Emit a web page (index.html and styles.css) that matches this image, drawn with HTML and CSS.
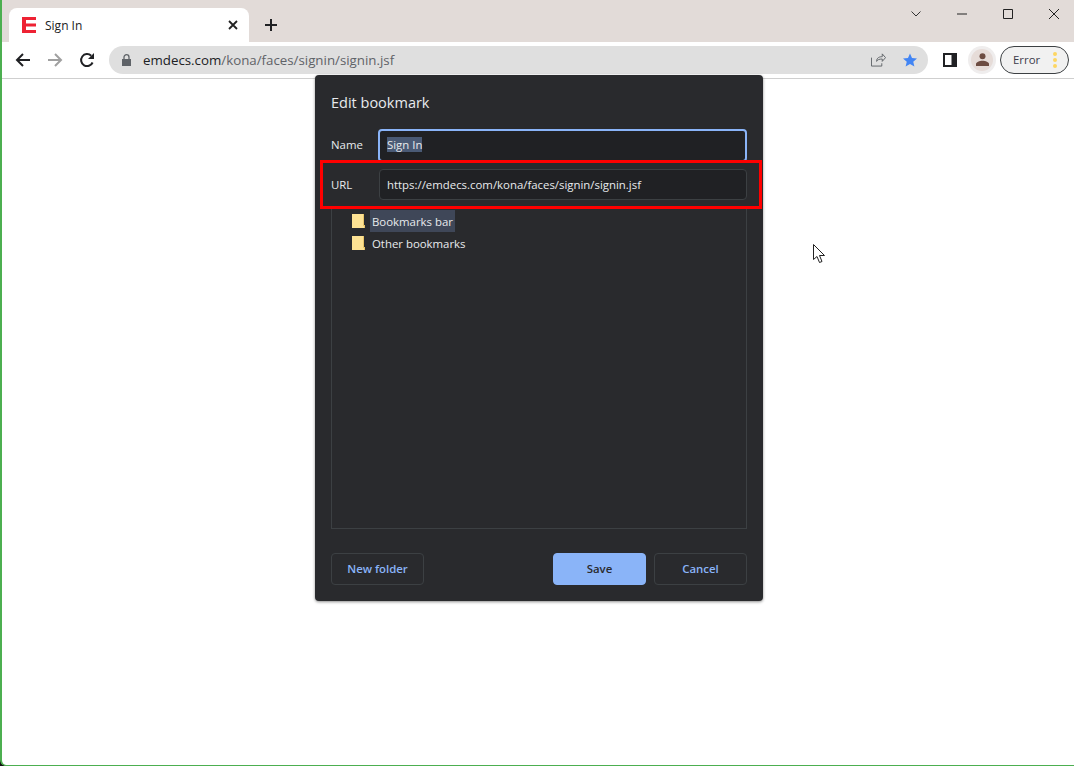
FILE: index.html
```html
<!DOCTYPE html>
<html lang="en">
<head>
    <meta charset="UTF-8">
    <title>Sign In</title>
    <link rel="stylesheet" href="styles.css">
</head>
<body>

<div class="janela">
    <div class="abas">
        <div class="aba">
            <svg class="favicon" width="14" height="16" viewBox="0 0 14 16"><path fill="#ee2233" d="M0 0h14v3H4v3.500h10v3H4V13h10v3H0z"/></svg>
            <span class="aba-titulo">Sign In</span>
            <svg class="aba-fechar" width="10" height="10" viewBox="0 0 10 10"><path stroke="#222" stroke-width="1.8" d="M1 1l8 8M9 1l-8 8"/></svg>
        </div>
        <svg class="nova-aba" width="12" height="12" viewBox="0 0 12 12"><path stroke="#202124" stroke-width="2" d="M6 0v12M0 6h12"/></svg>
        <div class="controles">
            <svg width="10" height="6" viewBox="0 0 10 6"><path fill="none" stroke="#333" d="M.5.500L5 5 9.500.500"/></svg>
            <svg width="10" height="10" viewBox="0 0 10 10"><path stroke="#222" d="M0 5h10"/></svg>
            <svg width="10" height="10" viewBox="0 0 10 10"><path fill="none" stroke="#222" d="M.5.5h9v9h-9z"/></svg>
            <svg width="10" height="10" viewBox="0 0 10 10"><path stroke="#222" d="M0 0l10 10M10 0L0 10"/></svg>
        </div>
    </div>

    <div class="barra">
        <svg class="nav" width="16" height="14" viewBox="0 0 16 14"><path fill="none" stroke="#202124" stroke-width="2" d="M15 7H2M8 1L2 7l6 6"/></svg>
        <svg class="nav" width="16" height="14" viewBox="0 0 16 14"><path fill="none" stroke="#a0a0a0" stroke-width="2" d="M1 7h13M8 1l6 6-6 6"/></svg>
        <svg class="nav nav-ultimo" width="16" height="16" viewBox="0 0 16 16"><path fill="none" stroke="#202124" stroke-width="2" d="M13.6 10.5A6 6 0 1 1 12.2 3.700"/><path fill="#202124" d="M15 1v6H9z"/></svg>
        <div class="url">
            <svg class="cadeado" width="9" height="12" viewBox="0 0 9 12"><path fill="#5f6368" d="M0 5h9v7H0z"/><path fill="none" stroke="#5f6368" stroke-width="1.300" d="M2 5V3.200a2.500 2.500 0 0 1 5 0V5"/></svg>
            <span class="url-texto"><b>emdecs.com</b>/kona/faces/signin/signin.jsf</span>
            <svg class="compartilhar" width="15" height="15" viewBox="0 0 16 15"><path fill="none" stroke="#5f6368" d="M.5 5.500v9h11v-3M6 9.500c0-4 3-5 6-5V1.500l3.500 4-3.500 4V7c-3 0-5 .5-6 2.500z"/></svg>
            <svg class="estrela" width="14" height="14" viewBox="0 0 16 15"><path fill="#4285f4" d="M8 0l2.300 5.200 5.700.5-4.300 3.800 1.300 5.500L8 12.100 3 15l1.300-5.500L0 5.700l5.700-.5z"/></svg>
        </div>
        <svg class="painel" width="14" height="14" viewBox="0 0 14 14"><path fill="#202124" d="M0 0h14v14H0z"/><path fill="#fff" d="M2 2h6.500v10H2z"/></svg>
        <div class="perfil">
            <div class="perfil-foto">
                <svg width="13" height="13" viewBox="0 0 13 13"><circle cx="6.500" cy="3.200" r="3" fill="#6d4c41"/><path fill="#6d4c41" d="M0 13v-2c0-2 3.500-3.300 6.500-3.300S13 9 13 11v2z"/></svg>
            </div>
        </div>
        <div class="erro">
            <span>Error</span>
            <div class="pontos"><i></i><i></i><i></i></div>
        </div>
    </div>

    <div class="pagina"></div>
</div>

<div class="dialogo">
    <div class="dialogo-titulo">Edit bookmark</div>
    <div class="linha linha-nome">
        <label>Name</label>
        <div class="campo campo-foco"><span class="selecao">Sign In</span></div>
    </div>
    <div class="linha linha-url">
        <label>URL</label>
        <div class="campo">https://emdecs.com/kona/faces/signin/signin.jsf</div>
    </div>
    <div class="arvore">
        <div class="item">
            <svg width="13" height="14" viewBox="0 0 13 14"><path fill="#fde293" d="M0 0h11v11h2v3H0z"/><path fill="#e8c468" d="M11 0h1v11h1v3h-1v-2h-1z"/></svg>
            <span class="item-nome ativo">Bookmarks bar</span>
        </div>
        <div class="item">
            <svg width="13" height="14" viewBox="0 0 13 14"><path fill="#fde293" d="M0 0h11v11h2v3H0z"/><path fill="#e8c468" d="M11 0h1v11h1v3h-1v-2h-1z"/></svg>
            <span class="item-nome">Other bookmarks</span>
        </div>
    </div>
    <div class="botoes">
        <button class="botao">New folder</button>
        <div class="botoes-direita">
            <button class="botao botao-salvar">Save</button>
            <button class="botao">Cancel</button>
        </div>
    </div>
</div>

<div class="destaque"></div>

<svg class="cursor" width="13" height="20" viewBox="0 0 13 20"><path fill="#fff" stroke="#222" d="M.5.5v15l3.500-3 2.500 6 2.500-1-2.500-6h5z"/></svg>

</body>
</html>
```

FILE: styles.css
```css
* {
    box-sizing: border-box;
}

body {
    margin: 0;
    height: 766px;
    overflow: hidden;
    background-color: #111;
    font-family: "Open Sans", "Noto Sans", sans-serif;
    color: #202124;
}

.janela {
    height: 766px;
    display: flex;
    flex-direction: column;
    background-color: #fff;
    border-left: 2px solid #4caf50;
    border-bottom: 1px solid #4caf50;
    border-bottom-left-radius: 6px;
}

.abas {
    height: 42px;
    flex-shrink: 0;
    display: flex;
    align-items: flex-end;
    padding-left: 7px;
    background-color: #e2dbd8;
}

.aba {
    width: 240px;
    height: 34px;
    display: flex;
    align-items: center;
    padding: 0 11px 0 13px;
    background-color: #fff;
    border-radius: 8px 8px 0 0;
}

.favicon {
    margin-right: 9px;
}

.aba-titulo {
    flex: 1;
    font-size: 12px;
}

.nova-aba {
    margin: 0 0 11px 16px;
}

.controles {
    margin-left: auto;
    align-self: flex-start;
    display: flex;
    align-items: center;
    height: 28px;
    gap: 36px;
    padding-right: 15px;
}

.barra {
    height: 37px;
    flex-shrink: 0;
    display: flex;
    align-items: center;
    padding: 0 0 1px 13px;
    background-color: #fff;
    border-bottom: 1px solid #cfcfcf;
}

.nav {
    margin-right: 16px;
}

.nav-ultimo {
    margin-right: 14px;
}

.url {
    width: 819px;
    height: 28px;
    display: flex;
    align-items: center;
    padding: 0 11px 0 13px;
    background-color: #dfdfdf;
    border-radius: 14px;
}

.url-texto {
    flex: 1;
    margin-left: 12px;
    font-size: 13.3px;
    color: #5f6368;
}

.url-texto b {
    font-weight: normal;
    color: #202124;
}

.compartilhar {
    margin-right: 17px;
}

.painel {
    margin-left: 15px;
}

.perfil {
    width: 28px;
    height: 28px;
    margin-left: 11px;
    padding: 3px;
    background-color: #efeded;
    border-radius: 50%;
}

.perfil-foto {
    width: 22px;
    height: 22px;
    display: flex;
    align-items: center;
    justify-content: center;
    background-color: #e6dcd8;
    border-radius: 50%;
}

.erro {
    width: 69px;
    height: 28px;
    margin-left: 4px;
    display: flex;
    align-items: center;
    justify-content: space-between;
    padding: 0 11px 0 12px;
    font-size: 11.4px;
    color: #3c3c4c;
    background-color: #f1f1f1;
    border: 1px solid #3c4043;
    border-radius: 14px;
}

.pontos {
    display: flex;
    flex-direction: column;
    gap: 2px;
}

.pontos i {
    width: 4px;
    height: 4px;
    background-color: #fdd663;
    border-radius: 50%;
}

.pagina {
    flex: 1;
}

/* por cima da pagina */
.dialogo {
    position: absolute;
    left: 315px;
    top: 75px;
    width: 448px;
    height: 526px;
    display: flex;
    flex-direction: column;
    padding: 16px;
    color: #e8eaed;
    font-size: 11.4px;
    background-color: #292a2d;
    border-radius: 4px;
    box-shadow: 0 1px 3px rgba(0, 0, 0, 0.45);
}

.dialogo-titulo {
    height: 38px;
    padding-top: 2px;
    font-size: 14.5px;
    line-height: 20px;
}

.linha {
    height: 31px;
    display: flex;
    align-items: center;
}

.linha-nome {
    height: 33px;
}

.linha-url {
    margin-top: 7px;
}

.linha label {
    width: 48px;
    flex-shrink: 0;
}

.linha-nome label {
    padding-bottom: 2px;
}

.campo {
    flex: 1;
    height: 100%;
    display: flex;
    align-items: center;
    padding: 0 7px;
    background-color: #202124;
    border: 1px solid #3c4043;
    border-radius: 4px;
}

.campo-foco {
    margin-left: -1px;
    padding: 0 7px 2px;
    border: 2px solid #8ab4f8;
}

.selecao {
    background-color: #4a5a75;
}

.arvore {
    flex: 1;
    margin-top: 8px;
    padding: 1px 0 0 20px;
    border: 1px solid #3c4043;
}

.item {
    height: 22px;
    display: flex;
    align-items: center;
}

.item svg {
    flex-shrink: 0;
}

.item-nome {
    height: 22px;
    line-height: 23px;
    margin-left: 5px;
    padding: 0 2px;
}

.ativo {
    background-color: #3f4758;
}

.botoes {
    display: flex;
    justify-content: space-between;
    margin-top: 24px;
}

.botoes-direita {
    display: flex;
    gap: 8px;
}

.botao {
    width: 93px;
    height: 32px;
    padding: 0 0 1px;
    font-family: inherit;
    font-size: 11.4px;
    font-weight: 600;
    color: #8ab4f8;
    background-color: transparent;
    border: 1px solid #3c4043;
    border-radius: 4px;
}

.botao-salvar {
    color: #292a2d;
    background-color: #8ab4f8;
    border-color: #8ab4f8;
}

.destaque {
    position: absolute;
    left: 320px;
    top: 160px;
    width: 442px;
    height: 49px;
    border: 3px solid #f00;
}

.cursor {
    position: absolute;
    left: 813px;
    top: 244px;
}
```
